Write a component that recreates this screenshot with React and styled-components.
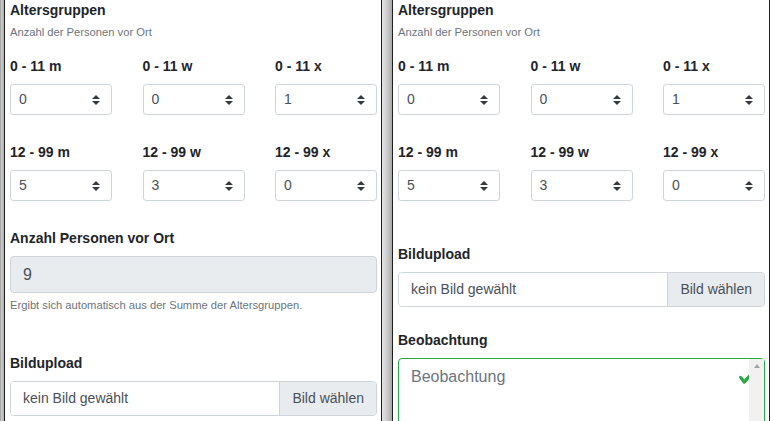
import React from 'react';
import styled, { createGlobalStyle } from 'styled-components';

const GlobalStyle = createGlobalStyle`
  html, body {
    margin: 0;
    padding: 0;
    height: 421px;
    overflow: hidden;
    background: #fff;
  }
  body {
    font-family: "Liberation Sans", Arial, sans-serif;
    font-size: 14px;
    line-height: 1.5;
    color: #212529;
  }
  * { box-sizing: border-box; }
`;

const Page = styled.div`
  display: flex;
  height: 421px;
`;

const EdgeShade = styled.div`
  width: 4px;
  background: linear-gradient(90deg, #9a9a9a, #c9c9c9 40%, #b0b0b0);
`;

const Gutter = styled.div`
  width: 10px;
  background: linear-gradient(90deg, #e4e4e4, #cfcfcf 50%, #a9a9a9);
`;

const Frame = styled.div`
  width: 378px;
  border-left: 1px solid #1e1e1e;
  border-right: 1px solid #1e1e1e;
  padding: 0 4px 0 5px;
  overflow: hidden;
`;

const Title = styled.div`
  font-weight: 700;
  font-size: 14px;
  line-height: 21px;
`;

const Hint = styled.div`
  margin-top: ${p => p.$mt}px;
  font-size: 11.2px;
  line-height: 16.8px;
  color: #6c757d;
`;

const AgeGrid = styled.div`
  margin-top: 15px;
  display: grid;
  grid-template-columns: repeat(3, 1fr);
  column-gap: 30.5px;
  row-gap: 26.5px;
`;

const Group = styled.div`
  margin-top: ${p => p.$mt}px;
`;

const Label = styled.label`
  display: block;
  font-weight: 700;
  font-size: 14px;
  line-height: 21px;
  margin-bottom: 7.5px;
`;

const SelectWrap = styled.div`
  position: relative;
`;

const Select = styled.select`
  display: block;
  width: 100%;
  height: 31px;
  padding: 4px 28px 4px 8px;
  font-family: inherit;
  font-size: 14px;
  line-height: 21px;
  color: #495057;
  background: #fff;
  border: 1px solid #ced4da;
  border-radius: 3.2px;
  appearance: none;
  outline: none;
`;

const Caret = styled.svg`
  position: absolute;
  right: 12px;
  top: 50%;
  width: 8px;
  height: 10px;
  margin-top: -5px;
  pointer-events: none;
`;

const ReadOnlyBox = styled.div`
  height: 37px;
  padding: 0 12px;
  display: flex;
  align-items: center;
  font-size: 16px;
  color: #495057;
  background: #e9ecef;
  border: 1px solid #ced4da;
  border-radius: 4px;
`;

const FileBox = styled.div`
  display: flex;
  height: 35px;
  border: 1px solid #ced4da;
  border-radius: 4px;
  overflow: hidden;
  color: #495057;
  font-size: 14px;
`;

const FileName = styled.div`
  flex: 1;
  display: flex;
  align-items: center;
  padding: 0 12px;
  background: #fff;
`;

const FileButton = styled.div`
  display: flex;
  align-items: center;
  padding: 0 12px;
  background: #e9ecef;
  border-left: 1px solid #ced4da;
`;

const AreaWrap = styled.div`
  position: relative;
`;

const TextArea = styled.textarea`
  display: block;
  width: 100%;
  height: 110px;
  padding: 6px 40px 6px 12px;
  font-family: inherit;
  font-size: 16px;
  line-height: 24px;
  color: #495057;
  border: 1px solid #28a745;
  border-radius: 4px;
  resize: none;
  overflow: hidden;
  outline: none;
  &::placeholder { color: #6c757d; }
`;

const ValidIcon = styled.svg`
  position: absolute;
  top: 9.5px;
  right: 9.5px;
  width: 18px;
  height: 18px;
`;

const ScrollTrack = styled.div`
  position: absolute;
  top: 1px;
  right: 1px;
  bottom: 1px;
  width: 15px;
  background: #f1f1f1;
  display: flex;
  justify-content: center;
  padding-top: 5px;
`;

const ScrollArrow = styled.div`
  width: 0;
  height: 0;
  border-left: 3.5px solid transparent;
  border-right: 3.5px solid transparent;
  border-bottom: 4px solid #a3a3a3;
`;

const ages = [
  { label: '0 - 11 m', value: 0 },
  { label: '0 - 11 w', value: 0 },
  { label: '0 - 11 x', value: 1 },
  { label: '12 - 99 m', value: 5 },
  { label: '12 - 99 w', value: 3 },
  { label: '12 - 99 x', value: 0 },
];

const AgeSelect = ({ label, value }) => (
  <div>
    <Label>{label}</Label>
    <SelectWrap>
      <Select defaultValue={value}>
        {Array.from({ length: 21 }, (_, i) => (
          <option key={i} value={i}>{i}</option>
        ))}
      </Select>
      <Caret viewBox="0 0 4 5">
        <path d="M2 0L0 2h4zm0 5L0 3h4z" fill="#343a40" />
      </Caret>
    </SelectWrap>
  </div>
);

const AgeGroups = () => (
  <>
    <Title>Altersgruppen</Title>
    <Hint $mt={3}>Anzahl der Personen vor Ort</Hint>
    <AgeGrid>
      {ages.map(a => <AgeSelect key={a.label} {...a} />)}
    </AgeGrid>
  </>
);

const ImageUpload = ({ mt }) => (
  <Group $mt={mt}>
    <Label>Bildupload</Label>
    <FileBox>
      <FileName>kein Bild gewählt</FileName>
      <FileButton>Bild wählen</FileButton>
    </FileBox>
  </Group>
);

const App = () => {
  const total = ages.reduce((sum, a) => sum + a.value, 0);

  return (
    <>
      <GlobalStyle />
      <Page>
        <EdgeShade />
        <Frame>
          <AgeGroups />
          <Group $mt={26.5}>
            <Label>Anzahl Personen vor Ort</Label>
            <ReadOnlyBox>{total}</ReadOnlyBox>
            <Hint $mt={4}>Ergibt sich automatisch aus der Summe der Altersgruppen.</Hint>
          </Group>
          <ImageUpload mt={38.6} />
        </Frame>
        <Gutter />
        <Frame>
          <AgeGroups />
          <ImageUpload mt={42.3} />
          <Group $mt={22.5}>
            <Label>Beobachtung</Label>
            <AreaWrap>
              <TextArea placeholder="Beobachtung" />
              <ValidIcon viewBox="0 0 8 8">
                <path
                  fill="#28a745"
                  d="M2.3 6.73L.6 4.53c-.4-1.04.46-1.4 1.1-.8l1.1 1.4 3.4-3.8c.6-.63 1.6-.27 1.2.7l-4 4.6c-.43.5-.8.4-1.1.1z"
                />
              </ValidIcon>
              <ScrollTrack>
                <ScrollArrow />
              </ScrollTrack>
            </AreaWrap>
          </Group>
        </Frame>
      </Page>
    </>
  );
};

export default App;
